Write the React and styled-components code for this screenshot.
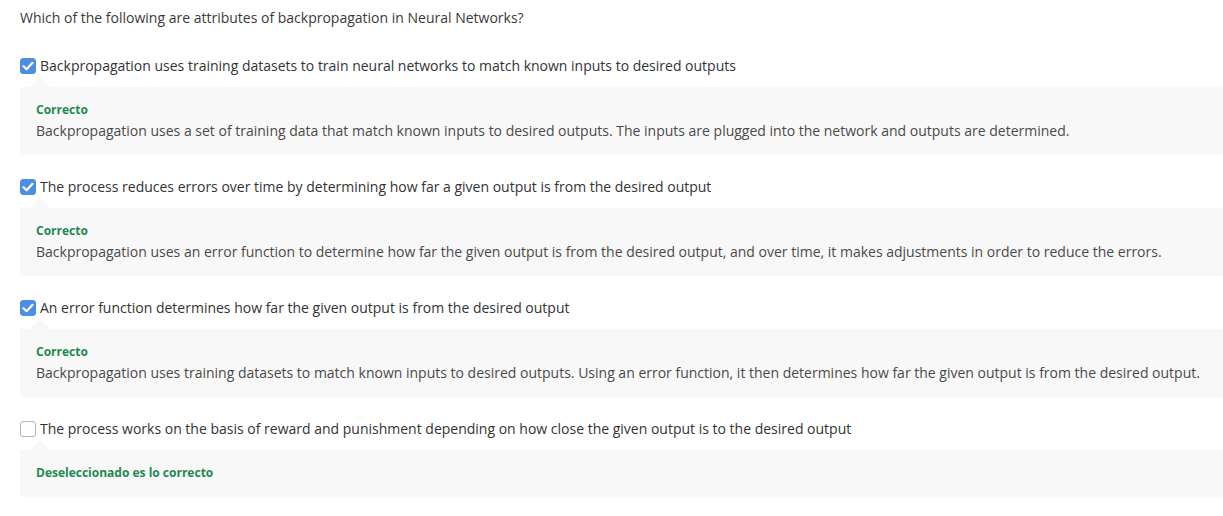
import React from "react";
import styled, { createGlobalStyle } from "styled-components";

const GlobalStyle = createGlobalStyle`
  body {
    margin: 0;
    background: #ffffff;
    font-family: "Open Sans", "Liberation Sans", sans-serif;
  }
`;

const Page = styled.div`
  padding: 8px 0 0 20px;
  color: #333333;
`;

const Question = styled.p`
  margin: 0 0 28px;
  font-size: 14px;
  line-height: 20px;
  color: #3a3a3a;
`;

const Item = styled.div`
  margin-bottom: 22px;
`;

const OptionRow = styled.label`
  display: flex;
  align-items: center;
  gap: 4px;
  font-size: 14px;
  line-height: 20px;
  color: #333333;
`;

const Box = styled.span`
  display: inline-flex;
  align-items: center;
  justify-content: center;
  width: 16px;
  height: 16px;
  box-sizing: border-box;
  border-radius: 3px;
  background: ${(p) => (p.$checked ? "#4a8fe3" : "#ffffff")};
  border: 1px solid ${(p) => (p.$checked ? "#4a8fe3" : "#b9b6b2")};
`;

const Feedback = styled.div`
  position: relative;
  margin-top: 11px;
  padding: 13px 16px 14px;
  background: #f8f8f8;

  &::before {
    content: "";
    position: absolute;
    top: -10px;
    left: 10px;
    border-left: 10px solid transparent;
    border-right: 10px solid transparent;
    border-bottom: 10px solid #f8f8f8;
  }
`;

const Verdict = styled.div`
  font-size: 12px;
  line-height: 20px;
  font-weight: 700;
  color: #1d8a4f;
`;

const Explanation = styled.div`
  margin-top: 1px;
  font-size: 14px;
  line-height: 20px;
  color: #4a4a4a;
`;

function Check({ checked }) {
  return (
    <Box $checked={checked}>
      {checked && (
        <svg width="12" height="10" viewBox="0 0 12 10">
          <path
            d="M1.5 5.2 L4.6 8.2 L10.5 1.8"
            fill="none"
            stroke="#ffffff"
            strokeWidth="2.2"
            strokeLinecap="round"
            strokeLinejoin="round"
          />
        </svg>
      )}
    </Box>
  );
}

const items = [
  {
    checked: true,
    text: "Backpropagation uses training datasets to train neural networks to match known inputs to desired outputs",
    verdict: "Correcto",
    explanation:
      "Backpropagation uses a set of training data that match known inputs to desired outputs. The inputs are plugged into the network and outputs are determined.",
  },
  {
    checked: true,
    text: "The process reduces errors over time by determining how far a given output is from the desired output",
    verdict: "Correcto",
    explanation:
      "Backpropagation uses an error function to determine how far the given output is from the desired output, and over time, it makes adjustments in order to reduce the errors.",
  },
  {
    checked: true,
    text: "An error function determines how far the given output is from the desired output",
    verdict: "Correcto",
    explanation:
      "Backpropagation uses training datasets to match known inputs to desired outputs. Using an error function, it then determines how far the given output is from the desired output.",
  },
  {
    checked: false,
    text: "The process works on the basis of reward and punishment depending on how close the given output is to the desired output",
    verdict: "Deseleccionado es lo correcto",
  },
];

export default function App() {
  return (
    <>
      <GlobalStyle />
      <Page>
        <Question>
          Which of the following are attributes of backpropagation in Neural
          Networks?
        </Question>
        {items.map((item, i) => (
          <Item key={i}>
            <OptionRow>
              <Check checked={item.checked} />
              {item.text}
            </OptionRow>
            <Feedback>
              <Verdict>{item.verdict}</Verdict>
              {item.explanation && (
                <Explanation>{item.explanation}</Explanation>
              )}
            </Feedback>
          </Item>
        ))}
      </Page>
    </>
  );
}
